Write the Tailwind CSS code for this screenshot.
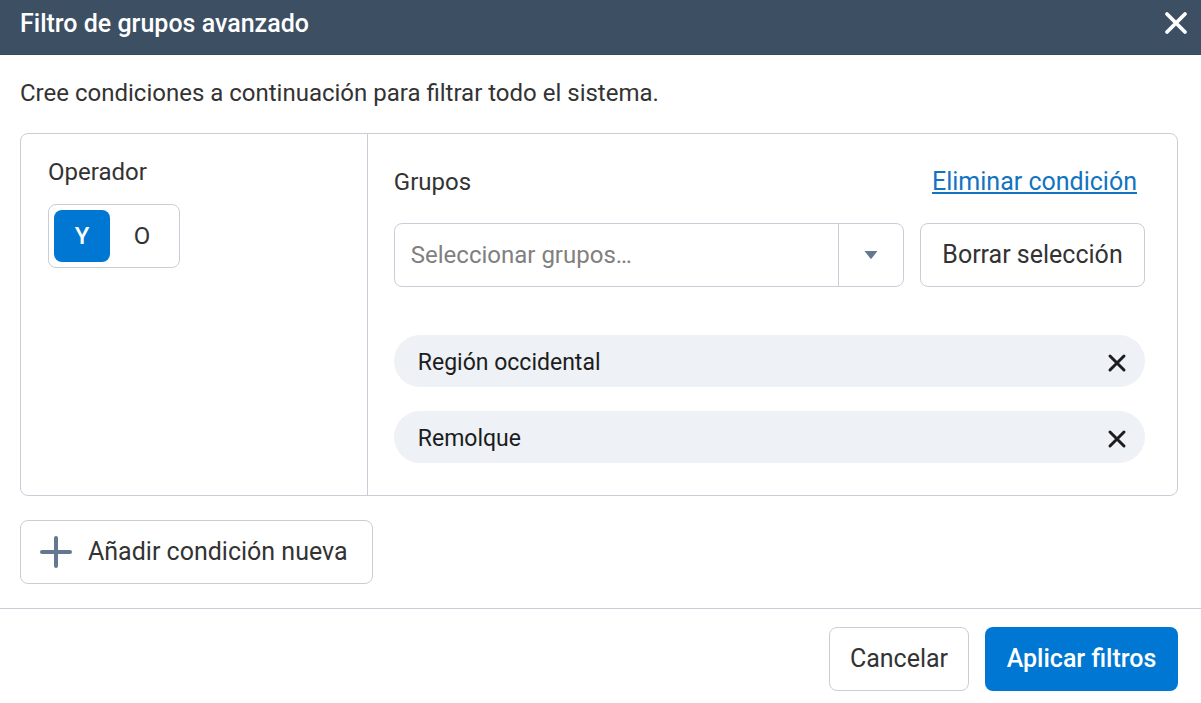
<!DOCTYPE html>
<html lang="es">
<head>
<meta charset="utf-8">
<meta name="viewport" content="width=device-width, initial-scale=1">
<title>Filtro de grupos avanzado</title>
<script src="https://cdn.jsdelivr.net/npm/@tailwindcss/browser@4"></script>
</head>
<body class="bg-white font-[Roboto,sans-serif] text-2xl text-[#333333]">
<div role="dialog" aria-labelledby="titulo" class="flex min-h-screen flex-col">
  <header class="flex items-start justify-between border-b border-[#344a60] bg-[#3c4f63] pt-2 pr-[11px] pb-3.5 pl-5 text-white">
    <h1 id="titulo" class="text-[25px]/8 font-medium">Filtro de grupos avanzado</h1>
    <button type="button" aria-label="Cerrar" class="flex size-7 items-center justify-center">
      <svg class="size-7" viewBox="0 0 28 28" fill="none" stroke="currentColor" stroke-width="3.8" stroke-linecap="round"><path d="M5 6l18 18M23 6L5 24"/></svg>
    </button>
  </header>

  <main class="pt-[22px] pr-[23px] pb-6 pl-5">
    <p class="mb-6">Cree condiciones a continuación para filtrar todo el sistema.</p>

    <section class="flex rounded-lg border border-[#c9ced6]">
      <fieldset class="w-[30%] min-w-44 border-r border-[#c9ced6] pt-[22px] pl-[27px]">
        <legend class="float-left mb-4">Operador</legend>
        <div class="clear-both flex h-16 w-[132px] rounded-lg border border-[#c9ced6] p-[5px]">
          <label class="flex w-[56px] cursor-pointer items-center justify-center rounded-lg has-checked:bg-[#0078d3] has-checked:font-medium has-checked:text-white"><input type="radio" name="operador" value="y" checked class="sr-only">Y</label>
          <label class="flex flex-1 cursor-pointer items-center justify-center rounded-lg has-checked:bg-[#0078d3] has-checked:font-medium has-checked:text-white"><input type="radio" name="operador" value="o" class="sr-only">O</label>
        </div>
      </fieldset>

      <div class="flex-1 pt-8 pr-8 pb-8 pl-[26px]">
        <div class="flex justify-between pr-2">
          <label for="grupos">Grupos</label>
          <a href="#" class="text-[25px]/8 text-[#1274bf] underline decoration-2 underline-offset-2">Eliminar condición</a>
        </div>
        <div class="mt-[25px] flex gap-4">
          <div class="flex h-16 min-w-0 flex-1 rounded-lg border border-[#c9ced6]">
            <input id="grupos" type="text" placeholder="Seleccionar grupos…" class="min-w-0 flex-1 rounded-l-lg px-4 placeholder:text-[#808080]">
            <button type="button" aria-label="Mostrar grupos" class="flex w-[65px] items-center justify-center border-l border-[#c9ced6] text-[#64788f]">
              <svg class="h-2 w-3.5" viewBox="0 0 14 8" fill="currentColor"><path d="M.5 0h13L7.600 7.500q-.6.700-1.200 0z"/></svg>
            </button>
          </div>
          <button type="button" class="h-16 w-[225px] rounded-lg border border-[#c9ced6] text-[25px]/8">Borrar selección</button>
        </div>
        <ul class="mt-12 flex flex-col gap-6 text-[23px]/8 text-[#1b1d20]">
          <li class="flex h-[52px] items-center justify-between rounded-full bg-[#eef1f6] pt-1 pr-4 pl-6">
            <span>Región occidental</span>
            <button type="button" aria-label="Quitar Región occidental"><svg class="size-6" viewBox="0 0 24 24" fill="none" stroke="currentColor" stroke-width="3" stroke-linecap="round"><path d="M5 5l14 14M19 5L5 19"/></svg></button>
          </li>
          <li class="flex h-[52px] items-center justify-between rounded-full bg-[#eef1f6] pt-1 pr-4 pl-6">
            <span>Remolque</span>
            <button type="button" aria-label="Quitar Remolque"><svg class="size-6" viewBox="0 0 24 24" fill="none" stroke="currentColor" stroke-width="3" stroke-linecap="round"><path d="M5 5l14 14M19 5L5 19"/></svg></button>
          </li>
        </ul>
      </div>
    </section>

    <button type="button" class="mt-6 flex h-16 w-[353px] items-center gap-4 rounded-lg border border-[#c9ced6] pl-[19px] text-[25px]/8">
      <svg class="size-8 text-[#64788f]" viewBox="0 0 32 32" fill="none" stroke="currentColor" stroke-width="4" stroke-linecap="round"><path d="M16 2v28M2 16h28"/></svg>
      Añadir condición nueva
    </button>
  </main>

  <footer class="flex justify-end gap-4 border-t border-[#c9ced6] pt-[18px] pr-[23px] pb-3 text-[25px]/8">
    <button type="button" class="h-16 w-[140px] rounded-lg border border-[#c9ced6]">Cancelar</button>
    <button type="button" class="h-16 w-[193px] rounded-lg bg-[#0078d3] font-medium text-white">Aplicar filtros</button>
  </footer>
</div>
</body>
</html>
